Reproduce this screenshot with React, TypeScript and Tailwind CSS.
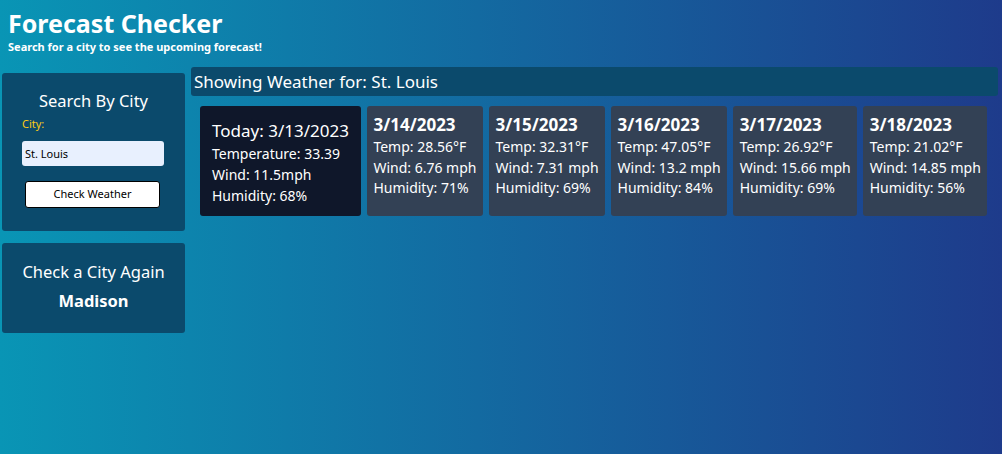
const days = [
  { date: "3/14/2023", temp: "28.56°F", wind: "6.76 mph", humidity: "71%" },
  { date: "3/15/2023", temp: "32.31°F", wind: "7.31 mph", humidity: "69%" },
  { date: "3/16/2023", temp: "47.05°F", wind: "13.2 mph", humidity: "84%" },
  { date: "3/17/2023", temp: "26.92°F", wind: "15.66 mph", humidity: "69%" },
  { date: "3/18/2023", temp: "21.02°F", wind: "14.85 mph", humidity: "56%" },
];

export default function App() {
  return (
    <div
      className="min-h-screen bg-[linear-gradient(to_right,#0995b5,#1e3b8b)] text-white"
      style={{ fontFamily: '"Noto Sans", sans-serif' }}
    >
      <header className="px-2 pt-[6px]">
        <h1 className="text-[25px] font-bold leading-[34px]">Forecast Checker</h1>
        <p className="text-[11px] font-bold leading-[14px]">Search for a city to see the upcoming forecast!</p>
      </header>

      <div className="mt-[13px] flex items-start">
        <aside className="ml-[2px] mt-[6px] flex w-[183px] shrink-0 flex-col gap-3">
          <div className="h-[158px] rounded-[3px] bg-[#0b4a6c] px-5 pt-[17px]">
            <h2 className="text-center text-[16.5px] leading-[22px]">Search By City</h2>
            <label className="mt-[4px] block text-[11px] leading-[16px] text-[#facc15]">City:</label>
            <input
              className="mt-[9px] block h-[25px] w-[142px] rounded-[3px] bg-[#e8f0fe] px-[3px] text-[11px] text-black outline-none"
              defaultValue="St. Louis"
            />
            <button className="ml-[3px] mt-[15px] block h-[27px] w-[135px] rounded-[3px] border border-black bg-white text-[11px] text-black">
              Check Weather
            </button>
          </div>
          <div className="h-[90px] rounded-[3px] bg-[#0b4a6c] px-3 pt-[16px] text-center">
            <p className="whitespace-nowrap text-[16.5px] leading-[26px]">Check a City Again</p>
            <p className="mt-[3px] text-[16.5px] font-bold leading-[26px]">Madison</p>
          </div>
        </aside>

        <main className="ml-[6px] mr-[4px] min-w-0 flex-1">
          <div className="rounded-[3px] bg-[#0b4a6c] px-[3px] py-[3px]">
            <h2 className="text-[17px] leading-[23px]">Showing Weather for: St. Louis</h2>
          </div>
          <div className="ml-[9px] mt-[10px] flex gap-[6px] whitespace-nowrap">
            <div className="h-[110px] shrink-0 rounded-[3px] bg-[#0f172a] px-3 pt-[13px]">
              <h3 className="text-[17px] leading-[24px]">Today: 3/13/2023</h3>
              <p className="text-[14px] leading-[21px]">Temperature: 33.39</p>
              <p className="text-[14px] leading-[21px]">Wind: 11.5mph</p>
              <p className="text-[14px] leading-[21px]">Humidity: 68%</p>
            </div>
            {days.map((d) => (
              <div key={d.date} className="h-[110px] shrink-0 rounded-[3px] bg-[#334155] px-[6.5px] pt-[7px]">
                <h3 className="text-[17px] font-bold leading-[24px]">{d.date}</h3>
                <p className="text-[14px] leading-[20.5px]">Temp: {d.temp}</p>
                <p className="text-[14px] leading-[20.5px]">Wind: {d.wind}</p>
                <p className="text-[14px] leading-[20.5px]">Humidity: {d.humidity}</p>
              </div>
            ))}
          </div>
        </main>
      </div>
    </div>
  );
}
